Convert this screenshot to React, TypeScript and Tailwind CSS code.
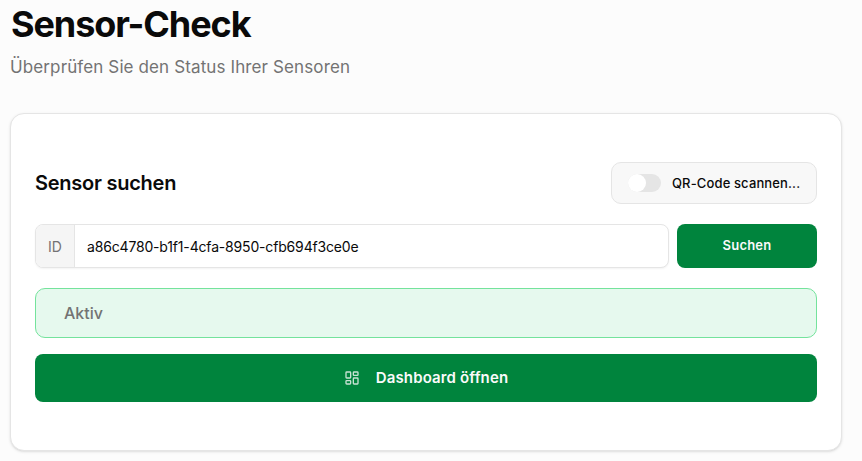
import { LayoutDashboard } from "lucide-react";

export default function App() {
  return (
    <div className="min-h-[461px] bg-[#fcfcfc] pl-[10px] pr-[20px] text-[#0a0a0a] font-['Inter',sans-serif]">
      <h1 className="text-[36px] leading-[40px] font-bold tracking-[-1.08px] pl-[1px] pt-[4px] h-[44px] text-[#0a0a0a]">Sensor-Check</h1>
      <p className="mt-[11px] text-[17px] leading-[24px] tracking-[0.12px] text-[#737373]">Überprüfen Sie den Status Ihrer Sensoren</p>
      <div className="mt-[34px] h-[338px] rounded-[14px] border border-[#e5e5e5] bg-white shadow-sm px-[24px] pt-[48px]">
        <div className="flex items-center justify-between h-[42px]">
          <h2 className="text-[20px] leading-[28px] font-semibold tracking-[-0.25px]">Sensor suchen</h2>
          <div className="flex items-center h-[42px] w-[206px] rounded-[10px] border border-[#e5e5e5] bg-[#f8f8f8] pl-[16px]">
            <span className="relative block w-[33px] h-[18px] rounded-full bg-[#e5e5e5]">
              <span className="absolute left-0 top-0 w-[18px] h-[18px] rounded-full bg-white" />
            </span>
            <span className="ml-[11px] text-[13px] leading-[16px] font-medium tracking-[0.13px]">QR-Code scannen...</span>
          </div>
        </div>
        <div className="mt-[20px] flex gap-[8px]">
          <div className="flex flex-1 h-[44px] rounded-[8px] border border-[#e5e5e5] bg-white shadow-xs overflow-hidden">
            <span className="flex items-center justify-center w-[39px] border-r border-[#e5e5e5] bg-[#f5f5f5] text-[14px] text-[#737373]">ID</span>
            <span className="flex items-center pl-[12px] text-[14px] tracking-[-0.17px]">a86c4780-b1f1-4cfa-8950-cfb694f3ce0e</span>
          </div>
          <button className="w-[140px] h-[44px] rounded-[8px] bg-[#00843d] text-[#fafafa] text-[13px] tracking-[0.2px] font-semibold">Suchen</button>
        </div>
        <div className="mt-[20px] flex items-center h-[50px] rounded-[10px] border border-[#74e39c] bg-[#e6f9ee] pl-[28px] text-[16px] font-medium text-[#737373]">Aktiv</div>
        <button className="mt-[16px] w-full h-[48px] flex items-center justify-center rounded-[8px] bg-[#00843d] text-[#fafafa] text-[15px] tracking-[0.14px] font-semibold">
          <LayoutDashboard className="w-[16px] h-[16px] mr-[16px] opacity-80" strokeWidth={2} />
          Dashboard öffnen
        </button>
      </div>
    </div>
  );
}
